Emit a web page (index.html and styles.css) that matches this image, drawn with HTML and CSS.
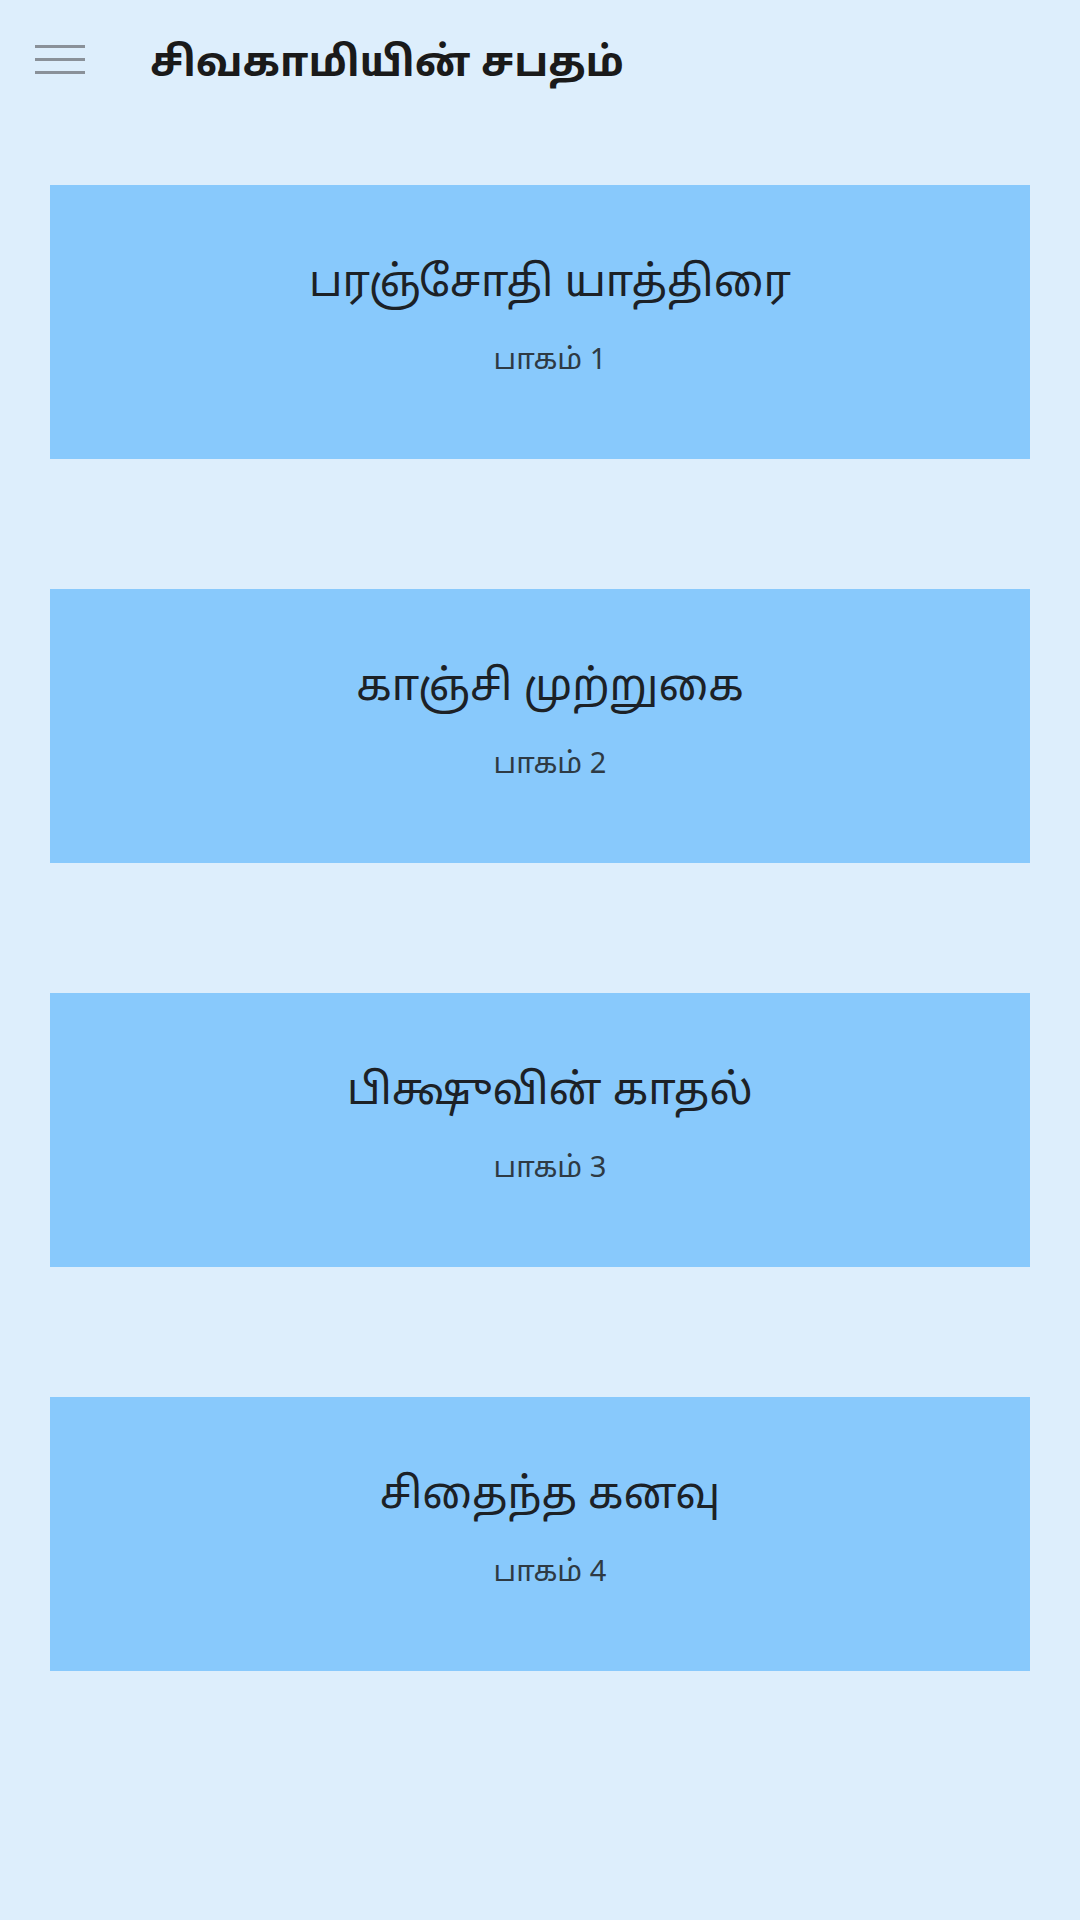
FILE: index.html
```html
<!DOCTYPE html>
<html lang="ta">
<head>
<meta charset="utf-8">
<title>சிவகாமியின் சபதம்</title>
<link rel="stylesheet" href="styles.css">
</head>
<body>
<header class="topbar">
  <div class="menu" aria-label="menu">
    <span class="bar"></span>
    <span class="bar"></span>
    <span class="bar"></span>
  </div>
  <h1 class="app-title">சிவகாமியின் சபதம்</h1>
</header>
<main class="list">
  <section class="card">
    <h2 class="card-title">பரஞ்சோதி யாத்திரை</h2>
    <p class="card-sub">பாகம் 1</p>
  </section>
  <section class="card">
    <h2 class="card-title">காஞ்சி முற்றுகை</h2>
    <p class="card-sub">பாகம் 2</p>
  </section>
  <section class="card">
    <h2 class="card-title">பிக்ஷுவின் காதல்</h2>
    <p class="card-sub">பாகம் 3</p>
  </section>
  <section class="card">
    <h2 class="card-title">சிதைந்த கனவு</h2>
    <p class="card-sub">பாகம் 4</p>
  </section>
</main>
</body>
</html>
```

FILE: styles.css
```css
* { box-sizing: border-box; }
html, body {
  margin: 0;
  padding: 0;
}
body {
  width: 1080px;
  min-height: 1920px;
  background: #ddeefc;
  font-family: "Noto Sans Tamil", "Noto Sans", "DejaVu Sans", sans-serif;
  color: #1e1e1e;
}
.topbar {
  display: flex;
  align-items: center;
  height: 120px;
  padding: 0 0 0 35px;
}
.menu {
  display: flex;
  flex-direction: column;
  gap: 10px;
  width: 50px;
  margin-top: -1px;
}
.bar {
  display: block;
  height: 3px;
  background: #8a9199;
}
.app-title {
  margin: 10px 0 0 65px;
  font-size: 41px;
  font-weight: 700;
  line-height: 1;
  color: #1a1a1a;
}
.list {
  display: flex;
  flex-direction: column;
  gap: 130px;
  padding: 65px 50px 0;
}
.card {
  height: 274px;
  background: #88c9fc;
  display: flex;
  flex-direction: column;
  align-items: center;
  padding: 75px 0 0 20px;
}
.card-title {
  margin: 0;
  font-size: 43px;
  font-weight: 400;
  line-height: 1.2;
  color: #1c2126;
}
.card-sub {
  margin: 33px 0 0;
  font-size: 29px;
  line-height: 1.2;
  color: #2e3a44;
}
```
